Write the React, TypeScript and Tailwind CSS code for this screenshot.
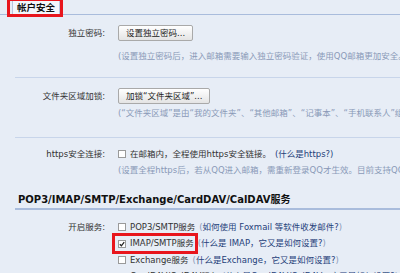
import React from "react";

const cjk = "font-['DejaVu_Sans','Noto_Sans_CJK_SC',sans-serif]";

function Btn({ children }: { children: React.ReactNode }) {
  return (
    <div className="flex h-[16px] items-center rounded-[2px] border border-[#a9a9a9] bg-gradient-to-b from-white to-[#e4e4e4] px-[7px] text-[8.5px] text-[#222]">
      {children}
    </div>
  );
}

function Box({ checked }: { checked?: boolean }) {
  return (
    <span className="flex h-[8px] w-[8px] shrink-0 items-center justify-center border border-[#9a9a9a] bg-white">
      {checked && (
        <svg width="6" height="6" viewBox="0 0 6 6">
          <path d="M0.8 3.2 L2.4 4.8 L5.2 1.2" stroke="#222" strokeWidth="1.3" fill="none" />
        </svg>
      )}
    </span>
  );
}

function Label({ children }: { children: React.ReactNode }) {
  return <div className="w-[106px] shrink-0 pr-[1px] text-right text-[8.5px] text-[#333]">{children}</div>;
}

function ServiceRow({ name, help, checked }: { name: string; help: string; checked?: boolean }) {
  return (
    <div className="flex h-[16.5px] items-center gap-[4px] whitespace-nowrap text-[8.5px]">
      <Box checked={checked} />
      <span className="text-[#333]">{name}</span>
      <span className="text-[#1f3f7a]">
        <span className="text-[#8a9ab8]">(</span>
        {help}
        <span className="text-[#8a9ab8]">)</span>
      </span>
    </div>
  );
}

export default function App() {
  return (
    <div className={`relative h-[273px] w-[400px] overflow-hidden bg-[#e7edf6] ${cjk}`}>
      {/* tab bar */}
      <div className="flex h-[15px] items-end border-b border-[#a9bcdc] pl-[12px]">
        <div className="mb-[-1px] flex h-[15px] w-[48px] items-center justify-center border border-b-0 border-[#b6c6df] bg-[#f3f6fb] text-[9.5px] font-bold text-[#111]">
          帐户安全
        </div>
      </div>

      {/* 独立密码 */}
      <div className="mt-[10px] flex items-center gap-[12px]">
        <Label>独立密码:</Label>
        <Btn>设置独立密码...</Btn>
      </div>
      <div className="mt-[9px] whitespace-nowrap pl-[118px] text-[8.5px] leading-[12px] text-[#8a9ab8]">
        (设置独立密码后，进入邮箱需要输入独立密码验证，使用QQ邮箱更加安全。)
      </div>
      <div className="ml-[15px] mt-[15px] border-t border-[#c8d5ea]" />

      {/* 文件夹区域加锁 */}
      <div className="mt-[10px] flex items-center gap-[12px]">
        <Label>文件夹区域加锁:</Label>
        <Btn>加锁“文件夹区域”...</Btn>
      </div>
      <div className="mt-[3px] whitespace-nowrap pl-[118px] text-[8.5px] leading-[12px] text-[#8a9ab8]">
        (“文件夹区域”是由“我的文件夹”、“其他邮箱”、“记事本”、“手机联系人”组成。)
      </div>
      <div className="ml-[15px] mt-[18px] border-t border-[#c8d5ea]" />

      {/* https */}
      <div className="mt-[10px] flex h-[12px] items-center gap-[12px] whitespace-nowrap">
        <Label>https安全连接:</Label>
        <div className="flex items-center gap-[4px] text-[8.5px]">
          <Box />
          <span className="text-[#333]">在邮箱内，全程使用https安全链接。</span>
          <span className="text-[#1f3f7a]">(什么是https?)</span>
        </div>
      </div>
      <div className="mt-[4px] whitespace-nowrap pl-[118px] text-[8.5px] leading-[12px] text-[#8a9ab8]">
        (设置全程https后，若从QQ进入邮箱，需重新登录QQ才生效。目前支持QQ2013)
      </div>

      {/* section title */}
      <div className="mt-[17px] h-[14px] whitespace-nowrap pl-[18px] font-['DejaVu_Sans','Noto_Sans_CJK_SC',sans-serif] text-[10px] font-bold leading-[14px] text-[#111]">
        POP3/IMAP/SMTP/Exchange/CardDAV/CalDAV服务
      </div>
      <div className="ml-[15px] mt-[1px] border-t-2 border-[#a9bcdc]" />

      {/* services */}
      <div className="mt-[9px] flex gap-[12px]">
        <Label>
          <div className="flex h-[16.5px] items-center justify-end">开启服务:</div>
        </Label>
        <div className="flex flex-col">
          <ServiceRow name="POP3/SMTP服务" help="如何使用 Foxmail 等软件收发邮件?" />
          <ServiceRow name="IMAP/SMTP服务" help="什么是 IMAP，它又是如何设置?" checked />
          <ServiceRow name="Exchange服务" help="什么是Exchange，它又是如何设置?" />
          <ServiceRow name="CardDAV/CalDAV服务" help="什么是CardDAV/CalDAV，它又是如何设置?" />
        </div>
      </div>

      {/* red annotation boxes */}
      <div className="absolute left-[7px] top-[-2px] h-[19px] w-[56px] border-[3px] border-[#e8161d]" />
      <div className="absolute left-[112px] top-[233px] h-[21px] w-[86px] border-[3px] border-[#e8161d]" />
    </div>
  );
}
